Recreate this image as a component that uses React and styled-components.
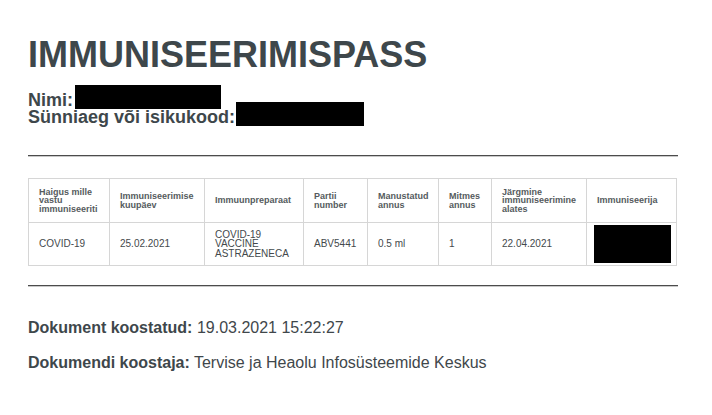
import React from "react";
import styled, { createGlobalStyle } from "styled-components";

const GlobalStyle = createGlobalStyle`
  html, body {
    margin: 0;
    padding: 0;
    background: #ffffff;
  }
  body {
    font-family: "Liberation Sans", Arial, sans-serif;
    color: #3f474b;
  }
`;

const columns = [
  { title: "Haigus mille vastu immuniseeriti", width: 81 },
  { title: "Immuniseerimise kuupäev", width: 95 },
  { title: "Immuunpreparaat", width: 99 },
  { title: "Partii number", width: 64 },
  { title: "Manustatud annus", width: 71 },
  { title: "Mitmes annus", width: 53 },
  { title: "Järgmine immuniseerimine alates", width: 95 },
  { title: "Immuniseerija", width: 90 },
];

const row = ["COVID-19", "25.02.2021", "COVID-19 VACCINE ASTRAZENECA", "ABV5441", "0.5 ml", "1", "22.04.2021", null];

const Page = styled.div`
  width: 650px;
  padding: 37px 0 0 28px;
`;

const Title = styled.h1`
  margin: 0;
  font-size: 36px;
  line-height: 36px;
  font-weight: 700;
  color: #3e474b;
`;

const Person = styled.div`
  margin-top: 19px;
  font-size: 18px;
  line-height: 17px;
  font-weight: 700;
  color: #3e474b;
`;

const Redacted = styled.span`
  display: inline-block;
  width: ${(p) => p.$w}px;
  height: 24px;
  margin: -8px 0 0 ${(p) => p.$gap}px;
  vertical-align: -3px;
  background: #000;
`;

const Rule = styled.hr`
  margin: ${(p) => p.$top}px 0 0;
  height: 0;
  border: 0;
  border-top: 1px solid #4c4c4c;
  border-bottom: 1px solid #c9c9c9;
`;

const Table = styled.table`
  margin-top: 21px;
  width: 649px;
  border-collapse: collapse;
  table-layout: fixed;
  font-family: "Liberation Sans", Arial, sans-serif;
`;

const HeadCell = styled.th`
  height: 43px;
  padding: 0 10px;
  border: 1px solid #d6d6d6;
  text-align: left;
  vertical-align: middle;
  font-size: 9px;
  line-height: 8.5px;
  font-weight: 700;
  color: #555b5e;
`;

const Cell = styled.td`
  height: 42px;
  padding: 0 10px;
  border: 1px solid #d6d6d6;
  vertical-align: middle;
  font-size: 10px;
  line-height: 9.6px;
  color: #44494c;
`;

const CellBlock = styled.div`
  width: 77px;
  height: 38px;
  margin-left: -3px;
  background: #000;
`;

const Footer = styled.div`
  margin-top: 31px;
  display: flex;
  flex-direction: column;
  gap: 15px;
`;

const Line = styled.p`
  margin: 0;
  font-size: 16px;
  line-height: 20px;
  color: #3f474b;
  b {
    font-weight: 700;
    color: #3e474b;
  }
`;

export default function App() {
  return (
    <>
      <GlobalStyle />
      <Page>
        <Title>IMMUNISEERIMISPASS</Title>
        <Person>
          <div>
            Nimi:<Redacted $w={146} $gap={2} />
          </div>
          <div>
            Sünniaeg või isikukood:<Redacted $w={128} $gap={1} />
          </div>
        </Person>
        <Rule $top={29} />
        <Table>
          <colgroup>
            {columns.map((c) => (
              <col key={c.title} style={{ width: c.width }} />
            ))}
          </colgroup>
          <thead>
            <tr>
              {columns.map((c) => (
                <HeadCell key={c.title}>{c.title}</HeadCell>
              ))}
            </tr>
          </thead>
          <tbody>
            <tr>
              {row.map((v, i) => (
                <Cell key={i}>{v === null ? <CellBlock /> : v}</Cell>
              ))}
            </tr>
          </tbody>
        </Table>
        <Rule $top={19} />
        <Footer>
          <Line>
            <b>Dokument koostatud:</b> 19.03.2021 15:22:27
          </Line>
          <Line>
            <b>Dokumendi koostaja:</b> Tervise ja Heaolu Infosüsteemide Keskus
          </Line>
        </Footer>
      </Page>
    </>
  );
}
